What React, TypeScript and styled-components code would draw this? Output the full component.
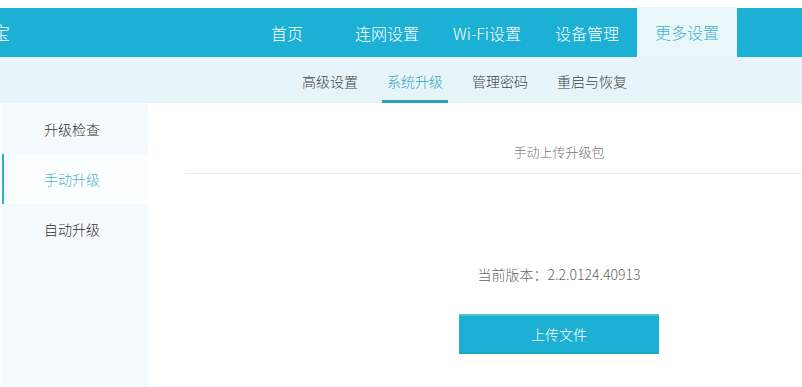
import React from "react";
import styled, { createGlobalStyle } from "styled-components";

const GlobalStyle = createGlobalStyle`
  html, body {
    margin: 0;
    padding: 0;
    background: #ffffff;
    overflow: hidden;
  }
  body {
    font-family: "Noto Sans CJK SC", "Noto Sans", "Liberation Sans", sans-serif;
    font-weight: 300;
  }
`;

const topTabs = ["首页", "连网设置", "Wi-Fi设置", "设备管理", "更多设置"];
const subTabs = ["高级设置", "系统升级", "管理密码", "重启与恢复"];
const sideItems = ["升级检查", "手动升级", "自动升级"];

const App = () => {
  return (
    <Page>
      <GlobalStyle />
      <Header>
        <Logo>路由宝</Logo>
        <Nav>
          {topTabs.map((t) => (
            <NavTab key={t} $active={t === "更多设置"}>
              {t}
            </NavTab>
          ))}
        </Nav>
      </Header>
      <SubNav>
        {subTabs.map((t) => (
          <SubTab key={t} $active={t === "系统升级"}>
            {t}
          </SubTab>
        ))}
      </SubNav>
      <Body>
        <Sidebar>
          {sideItems.map((t) => (
            <SideItem key={t} $active={t === "手动升级"}>
              {t}
            </SideItem>
          ))}
        </Sidebar>
        <Main>
          <Panel>
            <PanelTitle>手动上传升级包</PanelTitle>
            <Version>当前版本：2.2.0124.40913</Version>
            <UploadBtn>上传文件</UploadBtn>
          </Panel>
        </Main>
      </Body>
    </Page>
  );
};

export default App;

const Page = styled.div`
  width: 802px;
  height: 387px;
  padding-top: 8px;
  box-sizing: border-box;
  display: flex;
  flex-direction: column;
  overflow: hidden;
`;

const Header = styled.div`
  height: 49px;
  background: #1cb0d4;
  display: flex;
  align-items: stretch;
  justify-content: space-between;
  padding-right: 65px;
`;

const Logo = styled.div`
  margin-left: -44px;
  font-size: 18px;
  line-height: 49px;
  color: #ffffff;
  white-space: nowrap;
`;

const Nav = styled.div`
  display: flex;
`;

const NavTab = styled.div<{ $active?: boolean }>`
  width: 100px;
  margin-top: ${(p) => (p.$active ? "-1px" : "0")};
  display: flex;
  align-items: center;
  justify-content: center;
  font-size: 16px;
  color: ${(p) => (p.$active ? "#45b2cd" : "#ffffff")};
  background: ${(p) => (p.$active ? "#e9f6fa" : "transparent")};
`;

const SubNav = styled.div`
  height: 46px;
  background: #e7f5fa;
  display: flex;
  align-items: stretch;
  padding-left: 297px;
  gap: 19px;
`;

const SubTab = styled.div<{ $active?: boolean }>`
  padding: 0 5px;
  display: flex;
  align-items: center;
  padding-top: 4px;
  font-size: 14px;
  color: ${(p) => (p.$active ? "#2fa6bf" : "#444444")};
  border-bottom: 3px solid ${(p) => (p.$active ? "#2ba3bb" : "transparent")};
  box-sizing: border-box;
`;

const Body = styled.div`
  flex: 1;
  display: flex;
`;

const Sidebar = styled.div`
  width: 146px;
  margin-left: 2px;
  padding-top: 1px;
  background: #f4fafd;
  display: flex;
  flex-direction: column;
`;

const SideItem = styled.div<{ $active?: boolean }>`
  height: 50px;
  display: flex;
  align-items: center;
  padding-left: 40px;
  font-size: 14px;
  color: ${(p) => (p.$active ? "#4eb3cc" : "#333333")};
  background: ${(p) => (p.$active ? "#fbfeff" : "transparent")};
  border-left: 2px solid ${(p) => (p.$active ? "#2bb3cc" : "transparent")};
`;

const Main = styled.div`
  flex: 1;
  padding-left: 37px;
  background: #ffffff;
  overflow: hidden;
`;

const Panel = styled.div`
  width: 748px;
  display: flex;
  flex-direction: column;
  align-items: center;
`;

const PanelTitle = styled.div`
  align-self: stretch;
  height: 71px;
  padding-top: 39px;
  box-sizing: border-box;
  text-align: center;
  font-size: 13px;
  color: #777777;
  border-bottom: 1px solid #e8ecee;
`;

const Version = styled.div`
  margin-top: 90px;
  font-size: 14px;
  color: #666666;
`;

const UploadBtn = styled.div`
  margin-top: 30px;
  width: 200px;
  height: 40px;
  box-sizing: border-box;
  display: flex;
  align-items: center;
  justify-content: center;
  background: #1cb0d4;
  border-top: 2px solid #4fc2dc;
  border-bottom: 2px solid #18a6c8;
  color: #ffffff;
  font-size: 14px;
`;
